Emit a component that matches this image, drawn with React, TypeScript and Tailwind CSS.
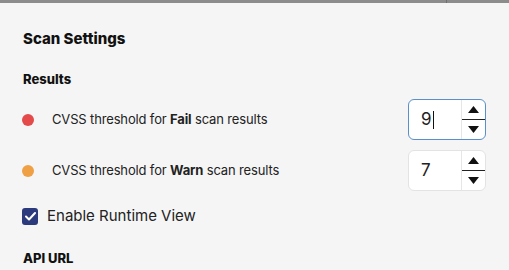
import React from 'react'

const font = { fontFamily: 'Inter, "Open Sans", sans-serif' }

function Spinner() {
  return (
    <div className="flex flex-col w-[24px] border-l border-[#e6e6e6] h-full">
      <div className="flex-1 flex items-center justify-center border-b border-[#222]">
        <svg width="11" height="7" viewBox="0 0 11 7"><path d="M5.5 0L11 7H0z" fill="#111" /></svg>
      </div>
      <div className="flex-1 flex items-center justify-center">
        <svg width="11" height="7" viewBox="0 0 11 7"><path d="M0 0h11L5.5 7z" fill="#111" /></svg>
      </div>
    </div>
  )
}

function NumberBox({ value, focused }: { value: string; focused?: boolean }) {
  return (
    <div
      className={`flex items-stretch w-[78px] h-[41px] bg-white rounded-[6px] border ${
        focused ? 'border-[#5b8fc7]' : 'border-[#e3e3e3]'
      }`}
    >
      <div className="flex-1 flex items-center pl-[12px] text-[17px] text-[#222]">
        {value}
        {focused && <span className="w-px h-[18px] bg-[#111] ml-[1px]" />}
      </div>
      <Spinner />
    </div>
  )
}

function ThresholdRow({ color, level, value, focused }: { color: string; level: string; value: string; focused?: boolean }) {
  return (
    <div className="flex items-center justify-between pr-[23px]">
      <div className="flex items-center">
        <span className={`w-[12px] h-[12px] rounded-full ml-[22px] ${color}`} />
        <span className="ml-[18px] text-[13px] tracking-[-0.15px] text-[#222]">
          CVSS threshold for <b className="font-bold">{level}</b> scan results
        </span>
      </div>
      <NumberBox value={value} focused={focused} />
    </div>
  )
}

export default function App() {
  return (
    <div className="w-[509px] h-[270px] overflow-hidden bg-[#f5f5f5]" style={font}>
      <div className="flex h-[3px] bg-[#8c8c8c]">
        <div className="w-[446px]" />
        <div className="w-px bg-[#6f6f6f]" />
      </div>
      <div className="pt-[26px] pl-[23px] text-[15px] leading-[20px] font-extrabold text-[#111]">Scan Settings</div>
      <div className="pt-[21px] pl-[23px] text-[13px] leading-[18px] font-extrabold text-[#111]">Results</div>
      <div className="flex flex-col gap-[10px] pt-[11px]">
        <ThresholdRow color="bg-[#e44a4a]" level="Fail" value="9" focused />
        <ThresholdRow color="bg-[#f0a044]" level="Warn" value="7" />
      </div>
      <div className="flex items-center h-[20px] mt-[15px] pl-[22px]">
        <span className="w-[16px] h-[17px] rounded-[3px] bg-[#2b3a7c] flex items-center justify-center">
          <svg width="11" height="9" viewBox="0 0 11 9">
            <path d="M1 4.5L4 7.5L10 1" stroke="#fff" strokeWidth="2" fill="none" strokeLinecap="round" strokeLinejoin="round" />
          </svg>
        </span>
        <span className="ml-[9px] text-[15px] leading-[20px] text-[#222]">Enable Runtime View</span>
      </div>
      <div className="pt-[23px] pl-[23px] text-[13px] leading-[18px] font-extrabold text-[#111]">API URL</div>
    </div>
  )
}
